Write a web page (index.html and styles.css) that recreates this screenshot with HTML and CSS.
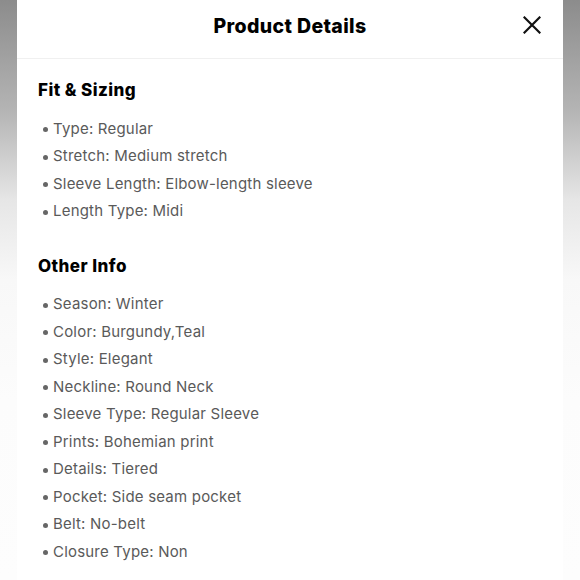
FILE: index.html
```html
<!DOCTYPE html>
<html>
<head>
<meta charset="utf-8">
<link rel="stylesheet" href="styles.css">
</head>
<body>
<div class="sheet">
  <header class="sheet-header">
    <h1 class="title">Product Details</h1>
    <button class="close" aria-label="Close">
      <svg width="18" height="18" viewBox="0 0 18 18"><path d="M1.5 1.5L16.5 16.5M16.5 1.5L1.5 16.5" stroke="#111" stroke-width="2.2" stroke-linecap="square"/></svg>
    </button>
  </header>
  <section class="section">
    <h2 class="section-title">Fit &amp; Sizing</h2>
    <ul class="list">
      <li>Type: Regular</li>
      <li>Stretch: Medium stretch</li>
      <li>Sleeve Length: Elbow-length sleeve</li>
      <li>Length Type: Midi</li>
    </ul>
  </section>
  <section class="section">
    <h2 class="section-title">Other Info</h2>
    <ul class="list">
      <li>Season: Winter</li>
      <li>Color: Burgundy,Teal</li>
      <li>Style: Elegant</li>
      <li>Neckline: Round Neck</li>
      <li>Sleeve Type: Regular Sleeve</li>
      <li>Prints: Bohemian print</li>
      <li>Details: Tiered</li>
      <li>Pocket: Side seam pocket</li>
      <li>Belt: No-belt</li>
      <li>Closure Type: Non</li>
    </ul>
  </section>
</div>
</body>
</html>
```
FILE: styles.css
```css
html, body {
  margin: 0;
  padding: 0;
  height: 100%;
}
body {
  background: linear-gradient(to bottom, #8c8c8c 0px, #b4b4b4 110px, #e6e6e6 200px, #f8f8f8 280px, #fcfcfc 400px, #fdfdfd 580px);
  font-family: "Inter", "Lato", sans-serif;
  overflow: hidden;
}
.sheet {
  margin: 0 17px;
  background: #fff;
  height: 100%;
}
.sheet-header {
  position: relative;
  height: 58px;
  border-bottom: 1px solid #f0f0f0;
  display: flex;
  align-items: center;
  justify-content: center;
}
.title {
  margin: 0 0 6px;
  font-size: 19.5px;
  font-weight: 800;
  color: #000;
  letter-spacing: 0.35px;
}
.close {
  position: absolute;
  right: 22px;
  top: 16px;
  width: 18px;
  height: 18px;
  padding: 0;
  border: 0;
  background: none;
}
.close svg {
  display: block;
}
.section {
  padding-left: 21px;
}
.section-title {
  margin: 19px 0 0;
  font-size: 17px;
  line-height: 24px;
  font-weight: 800;
  color: #000;
  letter-spacing: 0.45px;
}
.section + .section .section-title {
  margin-top: 29px;
}
.list {
  list-style: none;
  margin: 12.5px 0 0;
  padding: 0 0 0 5px;
}
.list li {
  font-size: 15px;
  line-height: 27.5px;
  color: #5a5a5a;
  letter-spacing: 0.2px;
  display: flex;
  align-items: center;
}
.list li::before {
  content: "";
  width: 5px;
  height: 5px;
  border-radius: 50%;
  background: #666;
  margin-right: 5px;
  margin-top: 3px;
}
```
